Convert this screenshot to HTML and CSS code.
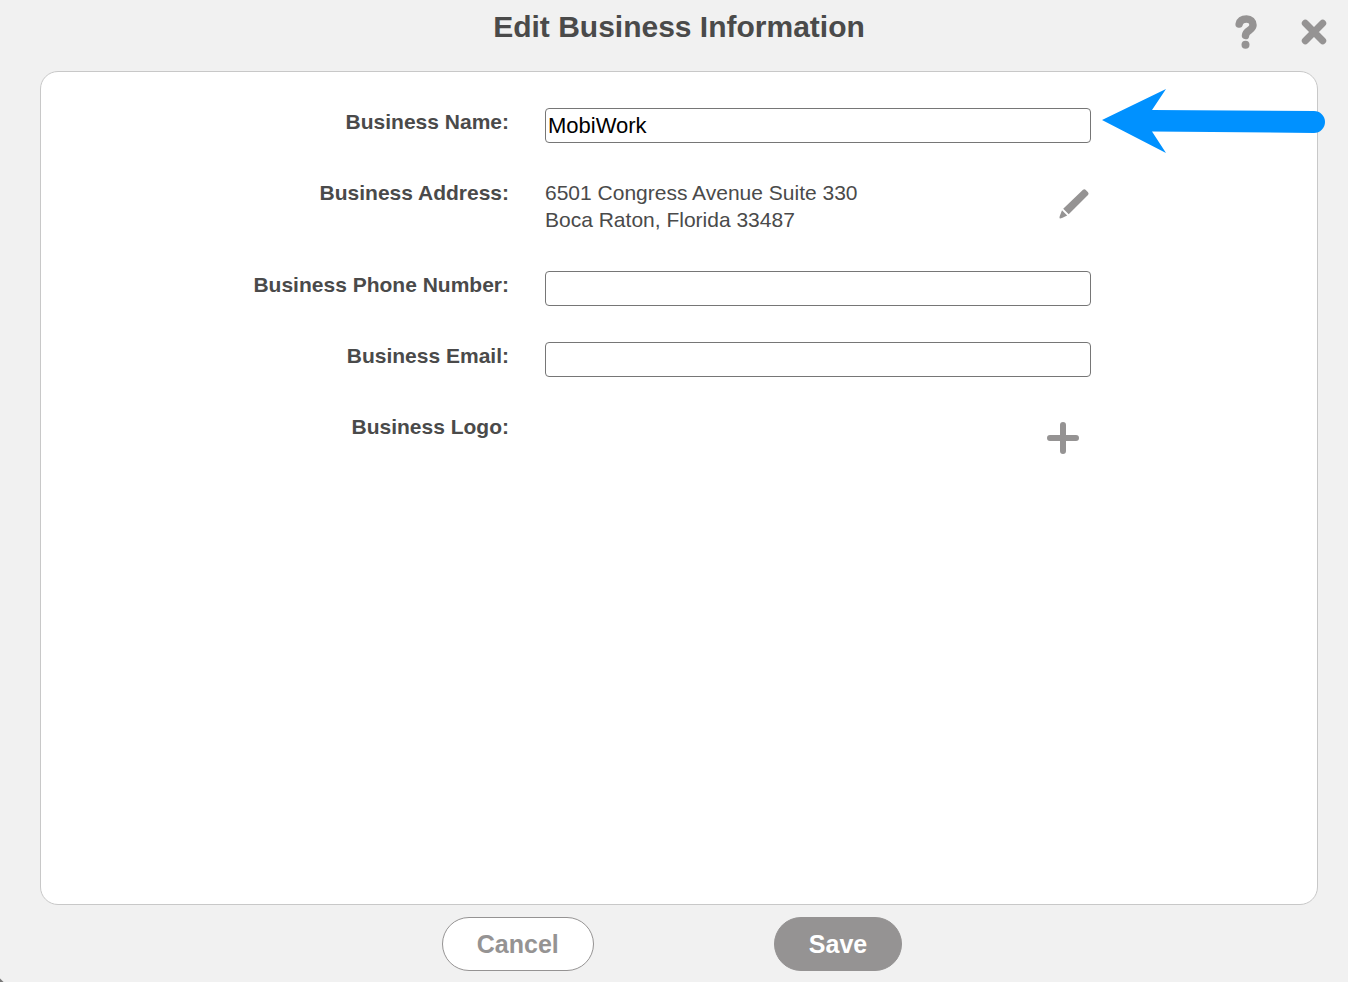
FILE: index.html
```html
<!DOCTYPE html>
<html lang="en">
<head>
<meta charset="utf-8">
<meta name="viewport" content="width=device-width, initial-scale=1">
<title>Edit Business Information</title>
<link rel="stylesheet" href="styles.css">
</head>
<body>
<form class="dialog">
  <header class="header">
    <h1 class="title">Edit Business Information</h1>
    <div class="tools">
      <button class="icon-button" type="button" aria-label="Help">
        <svg width="24" height="36" viewBox="0 0 24 36"><path d="M6.200 10C7 6.500 10 5 13.500 5C17.500 5 20 7.500 20 11C20 16.500 12.700 16 12.500 21.500" fill="none" stroke="currentColor" stroke-width="7.500" stroke-linecap="round" stroke-linejoin="round"/><circle cx="12.500" cy="30.700" r="4" fill="currentColor"/></svg>
      </button>
      <button class="icon-button" type="button" aria-label="Close">
        <svg width="26" height="26" viewBox="0 0 26 26"><path d="M4.300 4.300L21.700 21.700M21.700 4.300L4.300 21.700" fill="none" stroke="currentColor" stroke-width="7" stroke-linecap="round"/></svg>
      </button>
    </div>
  </header>

  <main class="card">
    <div class="row">
      <label class="label" for="name">Business Name:</label>
      <div class="field">
        <input class="input" id="name" type="text" value="MobiWork">
        <svg class="pointer" width="224" height="66" viewBox="0 0 224 66" aria-hidden="true"><path d="M0 31L64 0L50 21L212 22A11 11 0 0 1 212 44L50 42.500L64 64Z" fill="#0091ff"/></svg>
      </div>
    </div>
    <div class="row">
      <span class="label">Business Address:</span>
      <div class="field address">
        <address class="address-text">6501 Congress Avenue Suite 330<br>Boca Raton, Florida 33487</address>
        <button class="icon-button edit" type="button" aria-label="Edit address">
          <svg width="32" height="32" viewBox="0 0 32 32"><path d="M24 2.800Q25.500 1.800 26.800 3L29 5.200Q30.200 6.600 29 8L9.700 27.300L4.200 21.800ZM3 23.300L8.200 28.500L3 31Q1 31.700 0.700 31.200Q0.200 30.500 0.800 29Z" fill="currentColor"/></svg>
        </button>
      </div>
    </div>
    <div class="row">
      <label class="label" for="phone">Business Phone Number:</label>
      <div class="field"><input class="input" id="phone" type="tel"></div>
    </div>
    <div class="row">
      <label class="label" for="email">Business Email:</label>
      <div class="field"><input class="input" id="email" type="email"></div>
    </div>
    <div class="row">
      <span class="label">Business Logo:</span>
      <div class="field logo">
        <button class="icon-button add" type="button" aria-label="Add logo">
          <svg width="32" height="32" viewBox="0 0 32 32"><path d="M16 3V29M3 16H29" fill="none" stroke="currentColor" stroke-width="6" stroke-linecap="round"/></svg>
        </button>
      </div>
    </div>
  </main>

  <footer class="footer">
    <button class="button cancel" type="button">Cancel</button>
    <button class="button save" type="submit">Save</button>
  </footer>
</form>
</body>
</html>
```
FILE: styles.css
```css
* {
  box-sizing: border-box;
}

body {
  margin: 0;
  background: linear-gradient(45deg, #777 2px, #f1f1f1 3px);
  color: #4a4a4a;
  font-family: "Liberation Sans", Arial, Helvetica, sans-serif;
  font-size: 21px;
  line-height: 27px;
}

.dialog {
  display: flex;
  flex-direction: column;
  min-height: 100vh;
  padding: 0 30px 0 40px;
}

.header {
  display: grid;
  grid-template-columns: 1fr auto 1fr;
  height: 71px;
}

.title {
  grid-column: 2;
  margin: 0;
  padding-top: 9px;
  font-size: 30px;
  line-height: 36px;
}

.tools {
  display: flex;
  justify-content: flex-end;
  align-items: center;
  gap: 44px;
  height: 64px;
  margin-right: -9px;
}

.icon-button {
  display: block;
  padding: 0;
  border: 0;
  background: none;
  color: #959393;
  cursor: pointer;
}

.icon-button svg {
  display: block;
}

.card {
  display: flex;
  flex: 1;
  flex-direction: column;
  gap: 36px;
  padding: 36px 0;
  border: 1px solid #c8c8c8;
  border-radius: 18px;
  background: #fff;
}

.row {
  display: grid;
  grid-template-columns: 468fr 546fr 190fr;
  column-gap: 36px;
}

.label {
  font-weight: bold;
  text-align: right;
}

.field {
  position: relative;
}

.input {
  display: block;
  width: 100%;
  height: 35px;
  padding: 0 2px;
  border: 1px solid #767676;
  border-radius: 4px;
  background: #fff;
  color: #000;
  font-family: inherit;
  font-size: 22px;
}

.pointer {
  position: absolute;
  top: -19px;
  left: 100%;
  margin-left: 11px;
}

.address {
  display: flex;
  justify-content: space-between;
  align-items: flex-start;
  min-height: 56px;
}

.address-text {
  font-style: normal;
}

.edit {
  padding-top: 8px;
}

.logo {
  display: flex;
  justify-content: flex-end;
  padding: 9px 12px 0 0;
}

.footer {
  display: flex;
  justify-content: center;
  gap: 180px;
  height: 77px;
  padding: 12px 14px 0 0;
}

.button {
  height: 54px;
  padding: 0 34px;
  border: 1px solid #959393;
  border-radius: 27px;
  font: bold 25px "Liberation Sans", Arial, Helvetica, sans-serif;
  cursor: pointer;
}

.cancel {
  background: #fff;
  color: #959393;
}

.save {
  background: #959393;
  color: #fff;
}
```
